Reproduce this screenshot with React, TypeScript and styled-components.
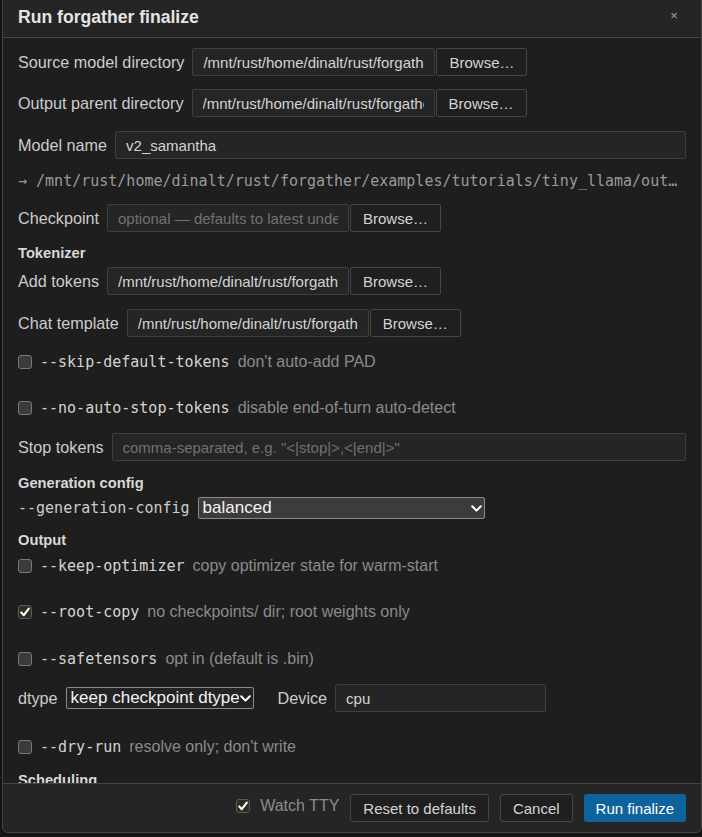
import React from "react";
import styled, { createGlobalStyle, css } from "styled-components";

const SANS = `"Liberation Sans", Arial, sans-serif`;
const MONO = `"DejaVu Sans Mono", "Liberation Mono", monospace`;

const GlobalStyle = createGlobalStyle`
  html, body { margin: 0; padding: 0; background: #141414; }
  body { font-family: ${SANS}; font-size: 16px; color: #cccccc; overflow: hidden; }
  *, *::before, *::after { box-sizing: border-box; }
`;

const Dialog = styled.div`
  margin-left: 2px;
  width: 700px;
  height: 833px;
  display: flex;
  flex-direction: column;
  background: #1e1e1e;
  border: 1px solid #454545;
  border-top: none;
  border-radius: 0 0 6px 6px;
  overflow: hidden;
`;

const Header = styled.header`
  flex: none;
  height: 38px;
  display: flex;
  align-items: flex-start;
  justify-content: space-between;
  padding: 7px 15px 0 15px;
  background: #252526;
  border-bottom: 1px solid #454545;
`;

const Title = styled.h2`
  margin: 0;
  font-size: 17.6px;
  line-height: 20px;
  font-weight: 700;
  color: #e4e4e4;
`;

const CloseButton = styled.button`
  width: 24px;
  height: 18px;
  padding: 0;
  margin: 0;
  border: none;
  background: transparent;
  color: #a0a0a0;
  font-family: ${SANS};
  font-size: 13px;
  line-height: 18px;
  cursor: pointer;
`;

const Body = styled.div`
  flex: 1 1 auto;
  min-height: 0;
  overflow: hidden;
  padding: 10px 15px 0 15px;
`;

const Footer = styled.footer`
  flex: none;
  height: 49px;
  display: flex;
  align-items: center;
  justify-content: flex-end;
  gap: 11px;
  padding: 0 15px;
  background: #252526;
  border-top: 1px solid #454545;
`;

const FieldRow = styled.div<{ $mt: number; $h?: number }>`
  display: flex;
  align-items: center;
  gap: 8px;
  height: ${(p) => p.$h ?? 28}px;
  margin-top: ${(p) => p.$mt}px;
`;

const FieldLabel = styled.label<{ $mono?: boolean; $lead?: number }>`
  white-space: nowrap;
  color: #cccccc;
  font-family: ${(p) => (p.$mono ? MONO : SANS)};
  font-size: ${(p) => (p.$mono ? 15 : 16.2)}px;
  margin-left: ${(p) => p.$lead ?? 0}px;
`;

const PathGroup = styled.div`
  display: flex;
  align-items: center;
  gap: 1px;
`;

const TextInput = styled.input<{ $w?: number }>`
  height: 28px;
  ${(p) =>
    p.$w
      ? css`
          width: ${p.$w}px;
        `
      : css`
          flex: 1 1 auto;
          min-width: 0;
        `}
  padding: 0 10px;
  background: #252526;
  border: 1px solid #3f3f3f;
  border-radius: 2px;
  color: #d4d4d4;
  font-family: ${SANS};
  font-size: 15px;
  outline: none;
  &::placeholder {
    color: #717171;
  }
`;

const BrowseButton = styled.button`
  height: 28px;
  padding: 0 12px;
  background: #1f1f1f;
  border: 1px solid #454545;
  border-radius: 2px;
  color: #d4d4d4;
  font-family: ${SANS};
  font-size: 15px;
  white-space: nowrap;
`;

const ResolvedPath = styled.div<{ $mt: number }>`
  margin-top: ${(p) => p.$mt}px;
  height: 20px;
  line-height: 20px;
  font-family: ${MONO};
  font-size: 15px;
  color: #9a9a9a;
  white-space: nowrap;
  overflow: hidden;
  text-overflow: ellipsis;
`;

const SectionHeading = styled.h3<{ $mt: number }>`
  margin: ${(p) => p.$mt}px 0 0 0;
  font-size: 14.7px;
  line-height: 18px;
  font-weight: 700;
  color: #d8d8d8;
`;

const CheckRow = styled.label<{ $mt: number }>`
  display: flex;
  align-items: center;
  height: 20px;
  margin-top: ${(p) => p.$mt}px;
`;

const Box = styled.span<{ $checked?: boolean }>`
  flex: none;
  display: inline-flex;
  align-items: center;
  justify-content: center;
  width: 14px;
  height: 14px;
  border-radius: 3px;
  border: 1px solid ${(p) => (p.$checked ? "#5d5e4c" : "#787878")};
  background: ${(p) => (p.$checked ? "#2b2c22" : "#3b3b3b")};
`;

const Flag = styled.span`
  margin-left: 8px;
  font-family: ${MONO};
  font-size: 15px;
  color: #d4d4d4;
  white-space: nowrap;
`;

const Hint = styled.span`
  margin-left: 8px;
  font-size: 16px;
  color: #8b8b8b;
  white-space: nowrap;
`;

const SelectWrap = styled.div<{ $w: number }>`
  position: relative;
  display: inline-flex;
  width: ${(p) => p.$w}px;
  height: 22px;
`;

const Select = styled.select<{ $variant: "raised" | "flat" }>`
  appearance: none;
  -webkit-appearance: none;
  width: 100%;
  height: 22px;
  padding: 0 14px 0 4px;
  border: 1px solid #8a8a8a;
  border-radius: 2px;
  background: ${(p) => (p.$variant === "raised" ? "#3c3c3c" : "#232323")};
  color: #f2f2f2;
  font-family: ${SANS};
  font-size: 17px;
  line-height: 20px;
  outline: none;
`;

const Chevron = styled.svg`
  position: absolute;
  right: 3px;
  top: 8px;
  pointer-events: none;
`;

const FooterButton = styled.button<{ $primary?: boolean }>`
  height: 28px;
  padding: 0 12px;
  border-radius: 3px;
  font-family: ${SANS};
  font-size: 15px;
  white-space: nowrap;
  ${(p) =>
    p.$primary
      ? css`
          background: #0e639c;
          border: none;
          color: #ffffff;
        `
      : css`
          background: #1f1f1f;
          border: 1px solid #454545;
          color: #d4d4d4;
        `}
`;

const WatchLabel = styled.label`
  display: flex;
  align-items: center;
  gap: 10px;
  margin-bottom: 4px;
  color: #8b8b8b;
  font-size: 16px;
  white-space: nowrap;
`;

const CheckMark = () => (
  <svg width="12" height="12" viewBox="0 0 12 12">
    <path d="M2.2 6.4 L4.8 9.2 L9.8 2.6" fill="none" stroke="#ffffff" strokeWidth="2.1" strokeLinecap="round" strokeLinejoin="round" />
  </svg>
);

const CheckBox = ({ checked }: { checked?: boolean }) => (
  <Box $checked={checked}>{checked ? <CheckMark /> : null}</Box>
);

const DropDown = ({
  w,
  variant,
  value,
  options,
}: {
  w: number;
  variant: "raised" | "flat";
  value: string;
  options: string[];
}) => (
  <SelectWrap $w={w}>
    <Select $variant={variant} defaultValue={value}>
      {options.map((o) => (
        <option key={o} value={o}>
          {o}
        </option>
      ))}
    </Select>
    <Chevron width="11" height="7" viewBox="0 0 11 7">
      <path d="M1.2 1.2 L5.5 5.6 L9.8 1.2" fill="none" stroke="#ffffff" strokeWidth="2" strokeLinecap="round" strokeLinejoin="round" />
    </Chevron>
  </SelectWrap>
);

const PathField = ({
  label,
  value,
  placeholder,
  width,
  mt,
}: {
  label: string;
  value?: string;
  placeholder?: string;
  width: number;
  mt: number;
}) => (
  <FieldRow $mt={mt}>
    <FieldLabel>{label}</FieldLabel>
    <PathGroup>
      <TextInput $w={width} defaultValue={value} placeholder={placeholder} />
      <BrowseButton>Browse…</BrowseButton>
    </PathGroup>
  </FieldRow>
);

const CheckOption = ({
  flag,
  hint,
  checked,
  mt,
}: {
  flag: string;
  hint: string;
  checked?: boolean;
  mt: number;
}) => (
  <CheckRow $mt={mt}>
    <CheckBox checked={checked} />
    <Flag>{flag}</Flag>
    <Hint>{hint}</Hint>
  </CheckRow>
);

const ROOT = "/mnt/rust/home/dinalt/rust/forgather/examples/tutorials/tiny_llama";

export default function App() {
  return (
    <>
      <GlobalStyle />
      <Dialog>
        <Header>
          <Title>Run forgather finalize</Title>
          <CloseButton aria-label="Close">×</CloseButton>
        </Header>
        <Body>
          <PathField label="Source model directory" value={`${ROOT}/output_models/default_model`} width={243} mt={0} />
          <PathField label="Output parent directory" value={`${ROOT}/output_models`} width={243} mt={13} />
          <FieldRow $mt={14}>
            <FieldLabel>Model name</FieldLabel>
            <TextInput defaultValue="v2_samantha" />
          </FieldRow>
          <ResolvedPath $mt={12}>→ {ROOT}/output_models/v2_samantha</ResolvedPath>
          <PathField label="Checkpoint" placeholder="optional — defaults to latest under source" width={242} mt={13} />

          <SectionHeading $mt={12}>Tokenizer</SectionHeading>
          <PathField label="Add tokens" value={`${ROOT}/tokenizer/add_tokens.yaml`} width={242} mt={5} />
          <PathField label="Chat template" value={`${ROOT}/tokenizer/chat_template.jinja`} width={242} mt={14} />
          <CheckOption flag="--skip-default-tokens" hint="don't auto-add PAD" mt={15} />
          <CheckOption flag="--no-auto-stop-tokens" hint="disable end-of-turn auto-detect" mt={26} />
          <FieldRow $mt={15}>
            <FieldLabel>Stop tokens</FieldLabel>
            <TextInput placeholder={'comma-separated, e.g. "<|stop|>,<|end|>"'} />
          </FieldRow>

          <SectionHeading $mt={13}>Generation config</SectionHeading>
          <FieldRow $mt={5} $h={22}>
            <FieldLabel $mono>--generation-config</FieldLabel>
            <DropDown w={287} variant="raised" value="balanced" options={["balanced", "greedy", "creative", "none"]} />
          </FieldRow>

          <SectionHeading $mt={12}>Output</SectionHeading>
          <CheckOption flag="--keep-optimizer" hint="copy optimizer state for warm-start" mt={7} />
          <CheckOption flag="--root-copy" hint="no checkpoints/ dir; root weights only" checked mt={26} />
          <CheckOption flag="--safetensors" hint="opt in (default is .bin)" mt={27} />
          <FieldRow $mt={15}>
            <FieldLabel>dtype</FieldLabel>
            <DropDown w={188} variant="flat" value="keep checkpoint dtype" options={["keep checkpoint dtype", "float32", "bfloat16", "float16"]} />
            <FieldLabel $lead={16}>Device</FieldLabel>
            <TextInput $w={211} defaultValue="cpu" />
          </FieldRow>
          <CheckOption flag="--dry-run" hint="resolve only; don't write" mt={25} />

          <SectionHeading $mt={14}>Scheduling</SectionHeading>
        </Body>
        <Footer>
          <WatchLabel>
            <CheckBox checked />
            Watch TTY
          </WatchLabel>
          <FooterButton>Reset to defaults</FooterButton>
          <FooterButton>Cancel</FooterButton>
          <FooterButton $primary>Run finalize</FooterButton>
        </Footer>
      </Dialog>
    </>
  );
}
